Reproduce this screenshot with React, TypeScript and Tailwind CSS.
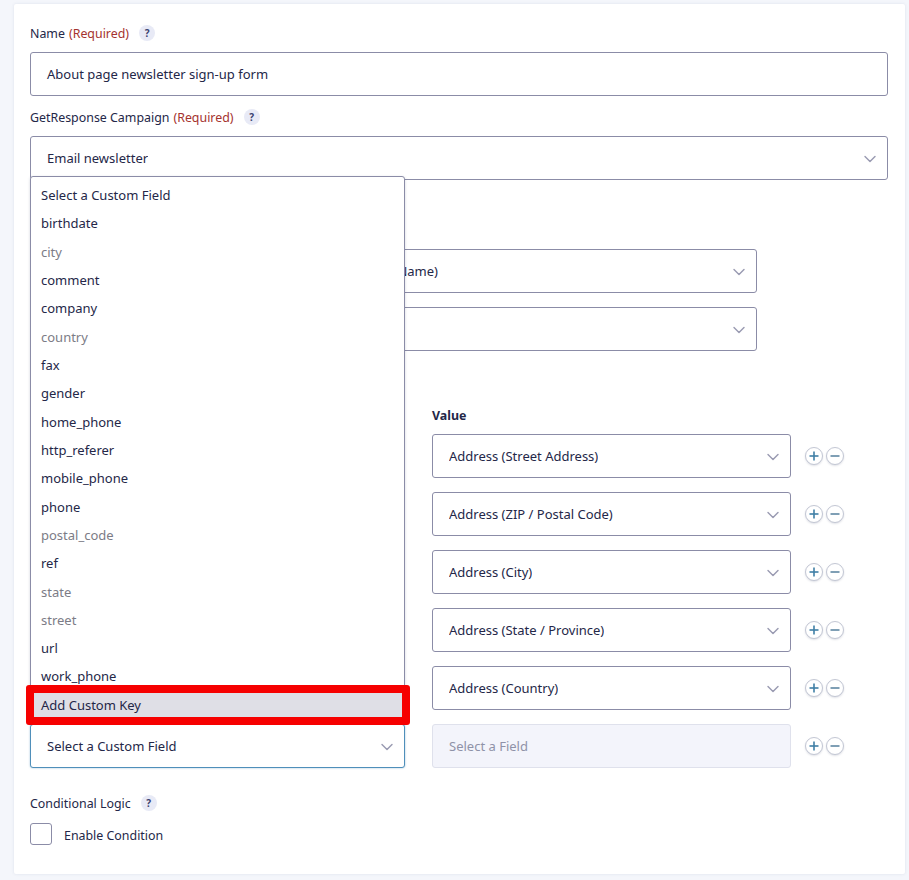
import type { ReactNode } from "react";
import { ChevronDown } from "lucide-react";

const options = [
  { label: "Select a Custom Field" },
  { label: "birthdate" },
  { label: "city", used: true },
  { label: "comment" },
  { label: "company" },
  { label: "country", used: true },
  { label: "fax" },
  { label: "gender" },
  { label: "home_phone" },
  { label: "http_referer" },
  { label: "mobile_phone" },
  { label: "phone" },
  { label: "postal_code", used: true },
  { label: "ref" },
  { label: "state", used: true },
  { label: "street", used: true },
  { label: "url" },
  { label: "work_phone" },
];

const customRows = [
  "Address (Street Address)",
  "Address (ZIP / Postal Code)",
  "Address (City)",
  "Address (State / Province)",
  "Address (Country)",
];

function Help() {
  return (
    <span className="ml-[10px] flex h-4 w-4 items-center justify-center rounded-full bg-[#e8eaf6] text-[10px] font-bold leading-none text-[#3a4270]">
      ?
    </span>
  );
}

function Label({ text, required }: { text: string; required?: boolean }) {
  return (
    <div className="flex h-5 items-center text-[12.4px] leading-5">
      <span className="pt-[2px]">{text}</span>
      {required && <span className="ml-1 pt-[2px] text-[#a5332f]">(Required)</span>}
      <Help />
    </div>
  );
}

function Chevron() {
  return <ChevronDown size={20} strokeWidth={1.7} className="mt-[1px] shrink-0 text-[#9a9bb2]" />;
}

function Select({ text = "", className = "border-[#8b8ca7]" }: { text?: string; className?: string }) {
  return (
    <div className={`flex h-11 items-center justify-between rounded-[3px] border bg-white pl-4 pr-[7px] text-[13px] ${className}`}>
      <span className="truncate pt-[2px]">{text}</span>
      <Chevron />
    </div>
  );
}

function RoundButton({ minus }: { minus?: boolean }) {
  return (
    <span className="flex h-[18px] w-[18px] items-center justify-center rounded-full border border-[#c3c7d4] bg-white shadow-[0_1px_2px_rgba(40,50,90,0.15)]">
      <svg width="12" height="12" viewBox="0 0 12 12" fill="none" stroke={minus ? "#5f87a3" : "#3f7fa6"} strokeWidth="1.6">
        <path d="M1.5 6h9" />
        {!minus && <path d="M6 1.5v9" />}
      </svg>
    </span>
  );
}

function MapRow({ children }: { children: ReactNode }) {
  return (
    <div className="flex items-center">
      {children}
      <div className="ml-[14px] flex gap-[3px]">
        <RoundButton />
        <RoundButton minus />
      </div>
    </div>
  );
}

export default function App() {
  return (
    <div className="h-[880px] overflow-hidden bg-[#f4f6fb] pl-[14px] pr-1 pt-1 font-['Noto_Sans','Open_Sans',sans-serif] text-[#242748]">
      <div className="relative h-[870px] rounded-[2px] bg-white px-4 pt-[19px] shadow-[0_0_3px_rgba(60,70,120,0.12)]">
        <Label text="Name" required />
        <div className="mt-[9px] flex h-11 w-[858px] items-center rounded-[3px] border border-[#8b8ca7] pl-4 pt-[2px] text-[13px]">
          About page newsletter sign-up form
        </div>

        <div className="mt-[11px]">
          <Label text="GetResponse Campaign" required />
        </div>
        <Select text="Email newsletter" className="mt-[9px] w-[858px] border-[#8b8ca7]" />

        <div className="mt-[69px] flex w-[727px] flex-col gap-[14px]">
          <div className="flex h-11 items-center justify-between rounded-[3px] border border-[#8b8ca7] pr-[7px] text-[13px]">
            <span className="w-[407px] pt-[2px] text-right">(Full Name)</span>
            <Chevron />
          </div>
          <Select />
        </div>

        <div className="ml-[402px] mt-[54px] h-5 pt-[1px] text-[12.4px] font-bold leading-5">Value</div>
        <div className="mt-[9px] flex w-[830px] flex-col gap-[14px]">
          {customRows.map((value) => (
            <MapRow key={value}>
              <Select className="w-[375px] border-[#8b8ca7]" />
              <Select text={value} className="ml-[27px] w-[359px] border-[#8b8ca7]" />
            </MapRow>
          ))}
          <MapRow>
            <Select text="Select a Custom Field" className="w-[375px] border-[#4f8fba] shadow-[0_0_2px_rgba(79,143,186,0.6)]" />
            <div className="ml-[27px] flex h-11 w-[359px] items-center rounded-[3px] border border-[#dfe1ec] bg-[#f3f4fb] pl-4 pt-[2px] text-[13px] text-[#8f92a8]">
              Select a Field
            </div>
          </MapRow>
        </div>

        <div className="mt-[25px]">
          <Label text="Conditional Logic" />
        </div>
        <div className="mt-[9px] flex items-center">
          <span className="h-[22px] w-[22px] rounded-[3px] border border-[#8b8ca7]" />
          <span className="ml-3 pt-[5px] text-[12.4px]">Enable Condition</span>
        </div>

        <div className="absolute left-4 top-[172px] w-[375px] rounded-[3px] border border-[#8b8ca7] bg-white pb-[1px] pt-[4.5px] text-[13px] shadow-[0_1px_3px_rgba(40,50,90,0.2)]">
          {options.map((o) => (
            <div key={o.label} className={`flex h-[28.33px] items-center pl-[10px] ${o.used ? "text-[#7c7c86]" : ""}`}>
              {o.label}
            </div>
          ))}
          <div className="relative flex h-[28.33px] items-center bg-[#dfdfe6] pl-[10px]">
            Add Custom Key
            <span className="absolute left-[-5px] top-[-6px] h-10 w-[384px] rounded-[3px] border-8 border-[#f60000]" />
          </div>
        </div>
      </div>
    </div>
  );
}
